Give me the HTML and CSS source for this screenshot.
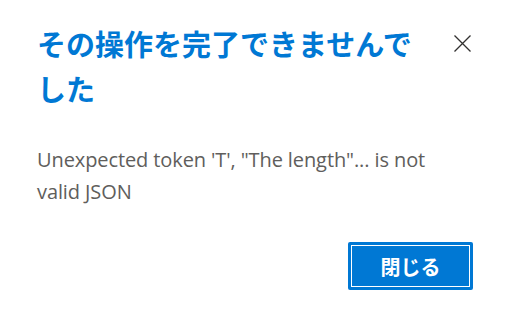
FILE: index.html
```html
<!DOCTYPE html>
<html lang="ja">
<head>
<meta charset="utf-8">
<link rel="stylesheet" href="styles.css">
</head>
<body>
<div class="dialog">
  <div class="header">
    <h1 class="title">その操作を完了できませんでした</h1>
    <button class="close" aria-label="閉じる">
      <svg width="17" height="17" viewBox="0 0 17 17"><path d="M0.5 0.5 L16.5 16.5 M16.5 0.5 L0.5 16.5" stroke="#323130" stroke-width="1.3" fill="none"/></svg>
    </button>
  </div>
  <p class="message">Unexpected token 'T', "The length"... is not valid JSON</p>
  <div class="footer">
    <button class="primary">閉じる</button>
  </div>
</div>
</body>
</html>
```
FILE: styles.css
```css
html, body {
  margin: 0;
  padding: 0;
  background: #ffffff;
}
.dialog {
  width: 509px;
  height: 326px;
  box-sizing: border-box;
  padding: 21px 36px 0 37px;
}
.header {
  display: flex;
  align-items: flex-start;
  justify-content: space-between;
}
.title {
  margin: 0;
  width: 395px;
  font-family: "Noto Sans CJK JP", sans-serif;
  font-weight: 700;
  font-size: 29px;
  line-height: 45px;
  color: #0078d4;
}
.close {
  margin: 14px 2px 0 0;
  padding: 0;
  border: 0;
  background: transparent;
  width: 17px;
  height: 17px;
  display: flex;
}
.message {
  margin: 33px 0 0 0;
  font-family: "Open Sans", sans-serif;
  font-size: 20px;
  letter-spacing: -0.1px;
  line-height: 32px;
  color: #605e5c;
}
.footer {
  display: flex;
  justify-content: flex-end;
  margin-top: 34px;
}
.primary {
  width: 125px;
  height: 48px;
  background: #0078d4;
  border: 0;
  border-radius: 2px;
  outline: 1px solid #ffffff;
  outline-offset: -4px;
  color: #ffffff;
  font-family: "Noto Sans CJK JP", sans-serif;
  font-weight: 700;
  font-size: 20px;
  padding: 0;
}
```
